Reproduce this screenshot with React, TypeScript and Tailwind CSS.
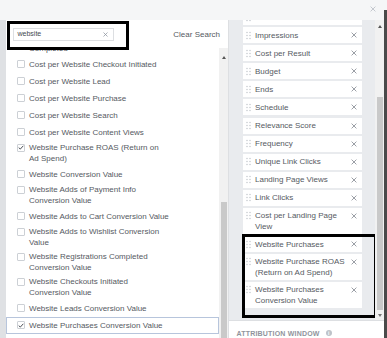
import React from "react";

const FONT = { fontFamily: '"Liberation Sans", Arial, Helvetica, sans-serif' };

type Row = { lines: string[]; checked?: boolean; active?: boolean };

const leftRows: Row[] = [
  { lines: ["Cost per Website Registration", "Completed"] },
  { lines: ["Cost per Website Checkout Initiated"] },
  { lines: ["Cost per Website Lead"] },
  { lines: ["Cost per Website Purchase"] },
  { lines: ["Cost per Website Search"] },
  { lines: ["Cost per Website Content Views"] },
  { lines: ["Website Purchase ROAS (Return on", "Ad Spend)"], checked: true },
  { lines: ["Website Conversion Value"] },
  { lines: ["Website Adds of Payment Info", "Conversion Value"] },
  { lines: ["Website Adds to Cart Conversion Value"] },
  { lines: ["Website Adds to Wishlist Conversion", "Value"] },
  { lines: ["Website Registrations Completed", "Conversion Value"] },
  { lines: ["Website Checkouts Initiated", "Conversion Value"] },
  { lines: ["Website Leads Conversion Value"] },
  { lines: ["Website Purchases Conversion Value"], checked: true, active: true },
];

const rightRows: string[][] = [
  ["Reach"],
  ["Impressions"],
  ["Cost per Result"],
  ["Budget"],
  ["Ends"],
  ["Schedule"],
  ["Relevance Score"],
  ["Frequency"],
  ["Unique Link Clicks"],
  ["Landing Page Views"],
  ["Link Clicks"],
  ["Cost per Landing Page", "View"],
];

const highlighted: string[][] = [
  ["Website Purchases"],
  ["Website Purchase ROAS", "(Return on Ad Spend)"],
  ["Website Purchases", "Conversion Value"],
];

function XIcon({ color = "#90949c", size = 6 }: { color?: string; size?: number }) {
  return (
    <svg width={size} height={size} viewBox="0 0 6 6" className="shrink-0 block">
      <path d="M0.6 0.6 L5.4 5.4 M5.4 0.6 L0.6 5.4" stroke={color} strokeWidth="0.9" fill="none" />
    </svg>
  );
}

function Checkbox({ checked }: { checked?: boolean }) {
  return (
    <span className="w-[8px] h-[8px] shrink-0 border border-[#ccd0d5] rounded-[1px] bg-white flex items-center justify-center">
      {checked && (
        <svg width="6" height="5" viewBox="0 0 6 5" className="block">
          <path d="M0.7 2.6 L2.3 4.1 L5.3 0.8" stroke="#4b4f56" strokeWidth="1" fill="none" />
        </svg>
      )}
    </span>
  );
}

function Dots() {
  return (
    <svg width="5" height="9" viewBox="0 0 5 9" className="shrink-0 block">
      {[1.5, 4.5, 7.5].map((y) => (
        <g key={y}>
          <circle cx="1" cy={y} r="0.75" fill="#c4c8ce" />
          <circle cx="4" cy={y} r="0.75" fill="#c4c8ce" />
        </g>
      ))}
    </svg>
  );
}

function LeftRow({ row }: { row: Row }) {
  const dbl = row.lines.length > 1;
  if (dbl) {
    return (
      <div className="flex items-start h-[25px] pt-[1.5px] pl-[11px] gap-[4px] shrink-0">
        <span className="mt-[1.5px]">
          <Checkbox checked={row.checked} />
        </span>
        <div className="leading-[11px] whitespace-nowrap">
          {row.lines.map((l) => (
            <div key={l}>{l}</div>
          ))}
        </div>
      </div>
    );
  }
  return (
    <div
      className={
        row.active
          ? "flex items-center h-[17px] pl-[10px] gap-[4px] shrink-0 border border-[#b7c5dc]"
          : "flex items-center h-[17px] pl-[11px] gap-[4px] shrink-0"
      }
    >
      <Checkbox checked={row.checked} />
      <span className="leading-[11px] whitespace-nowrap">{row.lines[0]}</span>
    </div>
  );
}

function RightItem({ lines }: { lines: string[] }) {
  const dbl = lines.length > 1;
  return (
    <div
      className={
        dbl
          ? "flex items-start bg-white w-[119px] h-[26px] pt-[2px] shrink-0"
          : "flex items-center bg-white w-[119px] h-[16px] shrink-0"
      }
    >
      <span className={dbl ? "ml-[3px] mt-[1px]" : "ml-[3px]"}>
        <Dots />
      </span>
      <div className="ml-[4px] leading-[11px] whitespace-nowrap flex-1">
        {lines.map((l) => (
          <div key={l}>{l}</div>
        ))}
      </div>
      <span className={dbl ? "mr-[5px] mt-[2.5px]" : "mr-[5px]"}>
        <XIcon />
      </span>
    </div>
  );
}

function UpArrow() {
  return <span className="w-0 h-0 border-x-[2.5px] border-x-transparent border-b-[3px] border-b-[#555]" />;
}
function DownArrow() {
  return <span className="w-0 h-0 border-x-[2.5px] border-x-transparent border-t-[3px] border-t-[#777]" />;
}

export default function App() {
  return (
    <div
      className="w-[387px] h-[338px] overflow-hidden flex bg-white text-[8px] text-[#555a62]"
      style={FONT}
    >
      <div className="w-[384px] flex flex-col">
        {/* top bar */}
        <div className="h-[20px] bg-[#f5f6f7] flex items-start shrink-0">
          <span className="ml-auto mr-[8px] mt-[6px]">
            <XIcon color="#bec3c9" size={6} />
          </span>
        </div>

        <div className="flex h-[318px]">
          {/* left strip */}
          <div className="w-[6px] bg-[#dfe1e4] shrink-0" />

          {/* left panel */}
          <div className="w-[223px] flex flex-col border-r border-[#dddfe2] bg-white shrink-0">
            <div className="relative z-10 h-[28px] flex items-start shrink-0">
              <div className="ml-[6.5px] mt-[7.5px] w-[101px] h-[13px] border border-[#dddfe2] bg-white flex items-center pl-[4px] pr-[5px]">
                <span className="text-[7px] text-[#444950] leading-[8px]">website</span>
                <span className="ml-auto">
                  <XIcon color="#8d949e" size={5} />
                </span>
              </div>
              <span className="ml-auto mr-[8px] mt-[10px] leading-[10px]">Clear Search</span>
              <div className="absolute left-[1px] top-[1px] w-[122px] h-[29px] border-[3px] border-black pointer-events-none" />
            </div>

            <div className="flex flex-1 min-h-0">
              <div className="w-[213px] overflow-hidden">
                <div className="-mt-[17.5px] flex flex-col">
                  {leftRows.map((r, i) => (
                    <LeftRow key={i} row={r} />
                  ))}
                </div>
              </div>
              {/* left scrollbar */}
              <div className="w-[9px] bg-[#f1f1f1] flex flex-col items-center">
                <div className="h-[18px] flex items-center justify-center shrink-0">
                  <UpArrow />
                </div>
                <div className="h-[136px] shrink-0" />
                <div className="flex-1 w-[6px] bg-[#c9c9c9]" />
              </div>
            </div>
          </div>

          {/* right column */}
          <div className="flex-1 flex flex-col">
            <div className="h-[300px] flex shrink-0">
              <div className="w-[146px] bg-[#e9ebee] overflow-hidden pl-[14px]">
                <div className="-mt-[11px] flex flex-col gap-[2.1px]">
                  {rightRows.map((r, i) => (
                    <RightItem key={i} lines={r} />
                  ))}
                  <div className="relative flex flex-col gap-[2.1px]">
                    {highlighted.map((r, i) => (
                      <RightItem key={i} lines={r} />
                    ))}
                    <div className="absolute -left-[1.5px] -right-[2px] -top-[2px] -bottom-[9.5px] border-[3px] border-black pointer-events-none" />
                  </div>
                </div>
              </div>
              {/* right scrollbar */}
              <div className="w-[9px] bg-[#f1f1f1] flex flex-col items-center">
                <div className="h-[12px] flex items-center justify-center shrink-0">
                  <UpArrow />
                </div>
                <div className="h-[65px] shrink-0" />
                <div className="h-[213px] w-[6px] bg-[#c9c9c9] shrink-0" />
                <div className="flex-1 flex items-center justify-center">
                  <DownArrow />
                </div>
              </div>
            </div>
            {/* footer */}
            <div className="flex-1 border-t border-[#dddfe2] bg-white flex items-start pl-[7.5px] pt-[9px]">
              <span className="text-[7px] font-bold leading-[7px] text-[#90949c] tracking-[0.2px]">
                ATTRIBUTION WINDOW
              </span>
              <span className="ml-[6px] w-[6px] h-[6px] rounded-full bg-[#bec3c9] text-white text-[5px] leading-[6px] flex items-center justify-center font-bold">
                i
              </span>
            </div>
          </div>
        </div>
      </div>
      {/* dark strip */}
      <div className="w-[3px] flex flex-col">
        <div className="h-[10px] bg-[#f5f6f7]" />
        <div className="flex-1 bg-[#4a4a4a]" />
      </div>
    </div>
  );
}
